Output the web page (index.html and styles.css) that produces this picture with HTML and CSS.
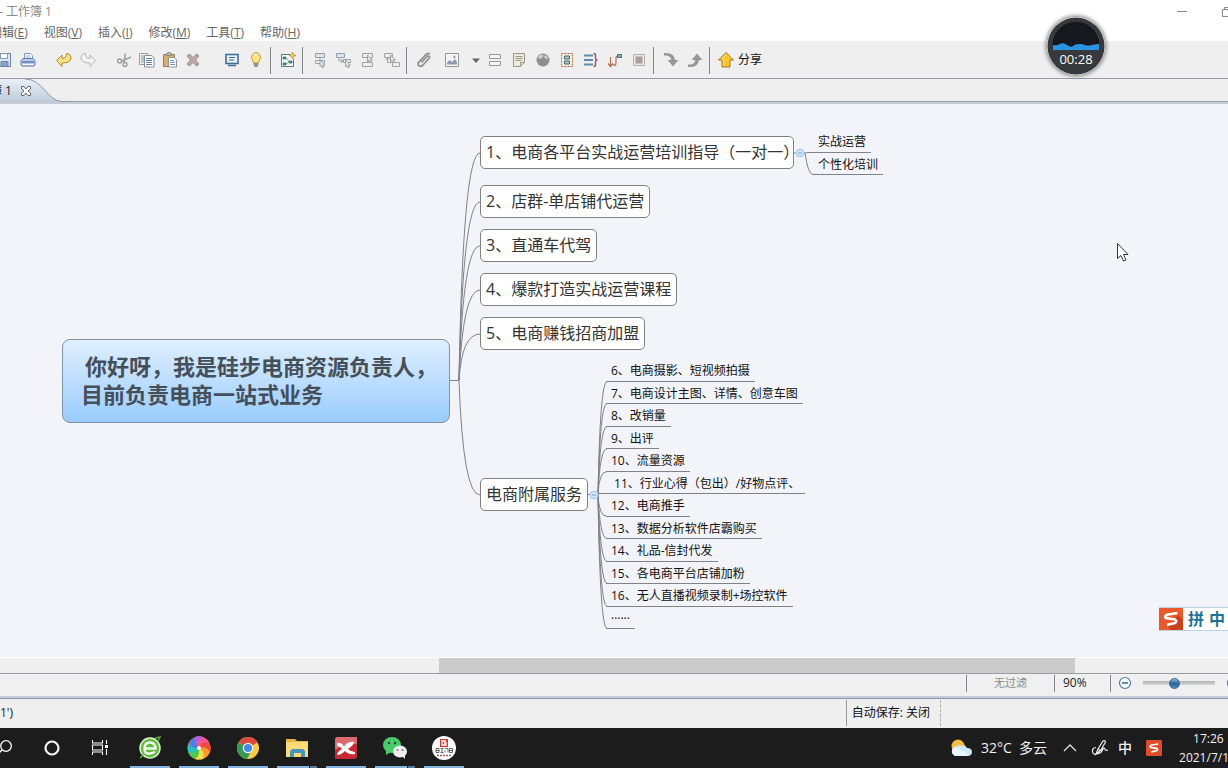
FILE: index.html
```html
<!DOCTYPE html>
<html lang="zh-CN">
<head>
<meta charset="utf-8">
<title>工作簿 1</title>
<link rel="stylesheet" href="styles.css">
</head>
<body>
<div class="app">
  <header class="titlebar">
    <span class="title">- 工作簿 1</span>
    <div class="window-buttons">
      <button class="plain" aria-label="最小化"><svg width="12" height="12" viewBox="0 0 12 12"><path d="M1 5.500h10" stroke="#888" fill="none"/></svg></button>
      <button class="plain" aria-label="还原"><svg width="12" height="12" viewBox="0 0 12 12"><path d="M1.500 3.500h7v7h-7zM3.500 3.500v-2h7v7h-2" stroke="#888" fill="none"/></svg></button>
    </div>
  </header>

  <nav class="menubar">
    <button>编辑(<u>E</u>)</button>
    <button>视图(<u>V</u>)</button>
    <button>插入(<u>I</u>)</button>
    <button>修改(<u>M</u>)</button>
    <button>工具(<u>T</u>)</button>
    <button>帮助(<u>H</u>)</button>
  </nav>

  <div class="toolbar">
    <div class="group first">
      <button aria-label="保存"><svg viewBox="0 0 16 16"><path d="M1.500 1.500h13v13h-11l-2-2z" fill="#dce8f4" stroke="#6685a6"/><path d="M4.500 1.500h7v5h-7z" fill="#fff" stroke="#7f9ab5"/><path d="M5 14V9.500h7V14" fill="#8ba6c2" stroke="#6685a6"/></svg></button>
      <button aria-label="打印"><svg viewBox="0 0 16 16"><path d="M4.500 7V1.500h6l2 2V7" fill="#fff" stroke="#8095b8"/><path d="M6 4h4M6 6h5" stroke="#8eabd1"/><path d="M1 8.500l2-2h10l2 2v4.500l-1 1H2l-1-1z" fill="#b9cde8" stroke="#607dab"/><path d="M2 10h12" stroke="#6f8fbd" stroke-width="2"/><path d="M2 12.500h12" stroke="#f4f8fc"/></svg></button>
    </div>
    <div class="group">
      <button aria-label="撤销"><svg viewBox="0 0 16 16"><path d="M.5 8.500L6 3v3.500Q11 6 10.500 1.500 15 2 15 6q0 5-9 5v3.500z" fill="#fbe08a" stroke="#b28c30"/></svg></button>
      <button aria-label="重做"><svg viewBox="0 0 16 16"><path d="M15.500 8.500L10 3v3.500Q5 6 5.500 1.500 1 2 1 6q0 5 9 5v3.500z" fill="#f2f2f2" stroke="#b4b4b4"/></svg></button>
    </div>
    <div class="group tight">
      <button aria-label="剪切"><svg viewBox="0 0 16 16"><path d="M8 10L9.500 1.500M6 9l9-4" stroke="#9d9d9d" stroke-width="1.500" fill="none"/><circle cx="3.500" cy="9" r="2" fill="none" stroke="#999" stroke-width="1.300"/><circle cx="9" cy="12.500" r="2" fill="none" stroke="#999" stroke-width="1.300"/></svg></button>
      <button aria-label="复制"><svg viewBox="0 0 16 16"><path d="M.5 1.500h8v11h-8z" fill="#f7f4e5" stroke="#a49e80"/><path d="M2 4h3M2 6h3M2 8h3M2 10h3" stroke="#7d94b8"/><path d="M5.500 3.500h7l2.500 2v9.500H5.500z" fill="#fff" stroke="#8d8f98"/><path d="M7 6.500h6M7 8.500h6M7 10.500h6M7 12.500h6" stroke="#5c81b5"/></svg></button>
      <button aria-label="粘贴"><svg viewBox="0 0 16 16"><path d="M1.500 2.500h11v12h-11z" fill="#dcae68" stroke="#a57a40"/><path d="M4 3.500q0-3 3-3t3 3z" fill="#bbb" stroke="#888"/><path d="M6.500 5.500h6l2 2v7.500h-8z" fill="#fff" stroke="#8c93a0"/><path d="M8 8.500h4M8 10.500h5M8 12.500h5" stroke="#7795c0"/></svg></button>
      <button aria-label="删除"><svg viewBox="0 0 16 16"><path d="M2 4l2.500-2L8 5.500 11.500 2 14 4l-3.500 4 3.500 4-2.500 2L8 10.500 4.500 14 2 12l3.500-4z" fill="#b9a8aa" stroke="#a39092"/></svg></button>
    </div>
    <div class="group">
      <button aria-label="演示"><svg viewBox="0 0 16 16"><rect x="2" y="2.500" width="12" height="9" fill="#e9f3fb" stroke="#426d9b" stroke-width="1.600"/><path d="M5 5.500h6M5 8h5" stroke="#426d9b"/><path d="M4 13.500h8" stroke="#426d9b" stroke-width="1.500"/></svg></button>
      <button aria-label="头脑风暴"><svg viewBox="0 0 16 16"><path d="M5.500 11Q5 9 4 7.500 2.500 5 4.500 2.500 6 .5 8 .5t3.500 2q2 2.500.5 5Q11 9 10.500 11z" fill="#ffe184" stroke="#ce9d3c"/><path d="M6 3.500q1-1.500 3-1" stroke="#fff" fill="none"/><path d="M5.500 12h5M6 14h4" stroke="#777c88" stroke-width="1.600"/></svg></button>
    </div>
    <span class="sep"></span>
    <div class="group">
      <button aria-label="新建图"><svg viewBox="0 0 16 16"><path d="M10 2.500H1.500v12h12V7" fill="#f7fbfd" stroke="#547d91"/><path d="M3 5h3v2H3zM3 11h3v2H3zM9 9h3v2H9z" fill="#568f62" stroke="#366b83" stroke-width=".7"/><path d="M6 6l3 3.500M6 12l3-2" stroke="#568f62" stroke-width=".8"/><path d="M12.500 0l1 2.500 2.500 1-2.500 1-1 2.500-1-2.500-2.500-1 2.500-1z" fill="#f3cf65" stroke="#ae812c" stroke-width=".7"/></svg></button>
    </div>
    <span class="sep"></span>
    <div class="group">
      <button aria-label="插入主题"><svg viewBox="0 0 16 16" fill="#eee" stroke="#9ba2a7"><path d="M3.500 1.500h9v4h-9z" fill="#dce6ef" stroke="#929fb0"/><path d="M8 5.500v3M3.500 8.500h9v3h-9z"/><path d="M8 8l5 5h-2.500L12 15l-1.500 1-1-2.500L8 14.500z"/></svg></button>
      <button aria-label="插入子主题"><svg viewBox="0 0 16 16" fill="#eee" stroke="#9ba2a7"><path d="M.5 1.500h8v4h-8z" fill="#dce6ef" stroke="#929fb0"/><path d="M3 6v3h4M5 7l2 2-2 2M7.500 7.500h7v3h-7z"/><path d="M9.500 8l5 5H12l1.500 2-1.500 1-1-2.500-1.500 1z"/></svg></button>
      <button aria-label="插入前主题"><svg viewBox="0 0 16 16" fill="#eee" stroke="#a1a3a0"><path d="M2.500 1.500h10v4h-10zM8 5.500v5M2.500 10.500h10v4h-10z"/><path d="M7.500 3l5 5H10l1.500 2-1.500 1-1-2.500-1.500 1z" fill="#e9e6d5"/></svg></button>
      <button aria-label="插入父主题"><svg viewBox="0 0 16 16" fill="#eee" stroke="#a1a3a0"><path d="M.5 1.500h8v4h-8zM3.500 6v4.500h5M1.500 8l2-2 2 2M8.500 10.500h7v4h-7z"/><path d="M6.500 3l5 5H9l1.500 2L9 11 8 8.500l-1.500 1z" fill="#e9e6d5"/></svg></button>
    </div>
    <span class="sep"></span>
    <div class="group">
      <button aria-label="附件"><svg viewBox="0 0 16 16"><path d="M5.500 10.500L11 4.500q1-1 2-.3 1 1 0 2.300l-6 6.500q-2 2-4 .7-2-1.700 0-3.700l7-7.500q2-2 4-.5" fill="none" stroke="#929292" stroke-width="1.800"/></svg></button>
      <button class="picture" aria-label="图片"><svg viewBox="0 0 16 16"><path d="M1.500 1.500h13v13h-13z" fill="#f4f4f6" stroke="#9797a0"/><path d="M3 12.500v-2L6 8l2 2 3-3 2 3v2.500z" fill="#8f9bae"/><path d="M9 5h3M10.500 3.500v3" stroke="#999"/></svg></button>
      <button class="drop" aria-label="图片选项"><svg viewBox="0 0 8 16"><path d="M0 6.500h8L4 11z" fill="#666"/></svg></button>
      <button aria-label="标签"><svg viewBox="0 0 16 16"><path d="M2.500 2.500h11v4h-11zM2.500 9.500h11v4h-11z" fill="#f5f5f5" stroke="#999"/></svg></button>
      <button aria-label="备注"><svg viewBox="0 0 16 16"><path d="M2.500 1.500h11v9l-4 4h-7z" fill="#eeeddd" stroke="#9a9980"/><path d="M4.500 4.500h7M4.500 6.500h7M4.500 8.500h6M9.500 14v-3.500h4" stroke="#9a9980" fill="none"/></svg></button>
      <button aria-label="超链接"><svg viewBox="0 0 16 16"><circle cx="8" cy="8" r="6.500" fill="#8e8e8e"/><path d="M3 5l3-2.500 3 1-2 2.500-3 1zM10 3l3 2-1 2.500-3-2z" fill="#d0d0d0"/></svg></button>
      <button aria-label="外框"><svg viewBox="0 0 16 16"><path d="M2.500 1.500h11v13h-11z" fill="none" stroke="#bc6c36" stroke-dasharray="2 1"/><path d="M5.500 4h5v3h-5zM5.500 9h5v3h-5z" fill="#b6c9c1" stroke="#426b65"/></svg></button>
      <button aria-label="概要"><svg viewBox="0 0 16 16"><path d="M1 3.500h9M1 8h9M1 12.500h9" stroke="#5f8cae" stroke-width="2"/><path d="M10.500 1.500q2 0 2 2V6q0 2 2 2-2 0-2 2v2.500q0 2-2 2" fill="none" stroke="#b44d6a" stroke-width="1.500"/></svg></button>
      <button aria-label="联系"><svg viewBox="0 0 16 16"><path d="M3.500 5v9M1 11.500l2.500 3 2.500-3M6 12.500q3 2.500 3-2V6q0-2 2-2" fill="none" stroke="#b36a4f" stroke-width="1.200"/><path d="M10.500 2.500h4v3h-4z" fill="#83a8a5" stroke="#3e737e"/></svg></button>
      <button aria-label="下钻"><svg viewBox="0 0 16 16"><path d="M2.500 2.500h11v11h-11z" fill="#eee5e5" stroke="#bbb0b0"/><path d="M4.500 4.500h7v7h-7z" fill="#ad9c9f"/></svg></button>
    </div>
    <span class="sep"></span>
    <div class="group">
      <button aria-label="深入"><svg viewBox="0 0 16 16"><path d="M1 1q10-1 11 7h3.500L10 14.500 4.500 8H8Q8 3 1 3.500z" fill="#989898"/></svg></button>
      <button aria-label="返回"><svg viewBox="0 0 16 16"><path d="M1 15q10 1 11-7h3.500L10 1.500 4.500 8H8q0 5-7 4.500z" fill="#989898"/></svg></button>
    </div>
    <span class="sep"></span>
    <button class="share"><svg viewBox="0 0 16 16"><path d="M8 .5L15.500 8H12v7H4V8H.5z" fill="#f9c52c" stroke="#a97725"/><path d="M8 2.500L4 7h1.500v6" stroke="#ffe994" fill="none"/></svg>分享</button>
  </div>

  <div class="tabs">
    <div class="tab">
      <svg class="tab-shape" width="72" height="23" viewBox="0 0 72 23"><defs><linearGradient id="tabFill" x2="0" y2="1"><stop stop-color="#e9f0f7"/><stop offset="1" stop-color="#bccbdc"/></linearGradient></defs><path d="M0 0h25c18 0 22 22 37 22.500h10v.5H0z" fill="url(#tabFill)"/><path d="M25 0c18 0 22 22 37 22.500h10" fill="none" stroke="#8d99a8"/></svg>
      <span class="tab-label">工作簿 1</span>
      <button class="plain tab-close" aria-label="关闭"><svg width="10" height="10" viewBox="0 0 10 10"><path d="M.5 .5h2.500L5 3 7 .5h2.500V3L7 5l2.500 2v2.500H7L5 7 3 9.500H.5V7L3 5 .5 3z" fill="#fff" stroke="#666"/></svg></button>
    </div>
  </div>

  <main class="canvas">
    <svg class="edges" width="1228" height="553" viewBox="0 104 1228 553" fill="none" stroke="#808287">
      <path d="M450 380.500h9M459 380Q463 153 480 153M459 380Q463 202 480 202M459 380Q463 246 480 246M459 380Q463 290 480 290M459 380Q462 334 480 334M459 380Q463 495 480 495"/>
      <path d="M794 153h11M805 153l3-.5M805 153Q808 174.500 813 174.500"/>
      <path d="M588 494.500h10M598 494.500Q600 381.500 607 381.500M598 494.500Q600 403.500 607 403.500M598 494.500Q600 426.500 607 426.500M598 494.500Q600 448.500 607 448.500M598 494.500Q599 471.500 607 471.500M598 493.500h9M598 494.500Q599 516.500 607 516.500M598 494.500Q600 538.500 607 538.500M598 494.500Q600 561.500 607 561.500M598 494.500Q600 583.500 607 583.500M598 494.500Q600 606.500 607 606.500M598 494.500Q600 628.500 607 628.500"/>
      <g fill="#cfe2f7" stroke="#a9c8ea"><circle cx="800" cy="153" r="4"/><circle cx="594" cy="495" r="4"/></g>
      <path d="M798 153h4M592 495h4" stroke="#7ba5d4"/>
    </svg>
    <div class="central"><div class="indent">你好呀，我是硅步电商资源负责人，</div><div>目前负责电商一站式业务</div></div>
    <div class="topic t1">1、电商各平台实战运营培训指导（一对一）</div>
    <div class="topic t2">2、店群-单店铺代运营</div>
    <div class="topic t3">3、直通车代驾</div>
    <div class="topic t4">4、爆款打造实战运营课程</div>
    <div class="topic t5">5、电商赚钱招商加盟</div>
    <div class="topic t6">电商附属服务</div>
    <ul class="subs training">
      <li>实战运营</li>
      <li>个性化培训</li>
    </ul>
    <ul class="subs services">
      <li>6、电商摄影、短视频拍摄</li>
      <li>7、电商设计主图、详情、创意车图</li>
      <li>8、改销量</li>
      <li>9、出评</li>
      <li>10、流量资源</li>
      <li>&nbsp;11、行业心得（包出）/好物点评、</li>
      <li>12、电商推手</li>
      <li>13、数据分析软件店霸购买</li>
      <li>14、礼品-信封代发</li>
      <li>15、各电商平台店铺加粉</li>
      <li>16、无人直播视频录制+场控软件</li>
      <li>······</li>
    </ul>
    <svg class="cursor" width="14" height="22" viewBox="0 0 14 22"><path d="M1.500 1.500v15l3.500-3 2.500 5.500 2.500-1-2.500-5.500h4.500z" fill="#fff" stroke="#333"/></svg>
    <div class="ime">
      <svg width="24" height="24" viewBox="0 0 24 24"><path d="M0 0h24v24H0z" fill="#e9592b"/><path d="M9 19l10-11 5 5v11H13z" fill="#c9421d"/><path d="M18.500 6L9 7.500Q5.500 8.500 6.500 11L16 12.500q2.500 1.500 0 3.500L8 18" fill="none" stroke="#fff" stroke-width="2.600" stroke-linejoin="round"/></svg>
      <span>拼</span><span>中</span>
    </div>
  </main>

  <div class="scrollbar"><div class="thumb"></div></div>

  <div class="statusbar">
    <span class="filter">无过滤</span>
    <span class="percent">90%</span>
    <div class="zoom">
      <button class="plain" aria-label="缩小"><svg width="14" height="14" viewBox="0 0 14 14"><circle cx="7" cy="7" r="5.500" fill="#f8fbff" stroke="#4f7ba9" stroke-width="1.200"/><path d="M4 7h6" stroke="#2f659c" stroke-width="1.500"/></svg></button>
      <input type="range" min="0" max="100" value="43" aria-label="缩放">
      <button class="plain" aria-label="放大"><svg width="14" height="14" viewBox="0 0 14 14"><circle cx="7" cy="7" r="5.500" fill="#f8fbff" stroke="#4f7ba9" stroke-width="1.200"/><path d="M4 7h6M7 4v6" stroke="#2f659c" stroke-width="1.500"/></svg></button>
    </div>
  </div>

  <footer class="infobar">
    <span class="selection">1')</span>
    <span class="autosave">自动保存: 关闭</span>
  </footer>

  <div class="taskbar">
    <div class="apps">
      <button aria-label="搜索"><svg viewBox="0 0 24 24"><circle cx="15" cy="10" r="5.300" fill="none" stroke="#fff" stroke-width="1.300"/><path d="M11 14l-5 5" stroke="#fff" stroke-width="1.300"/></svg></button>
      <button aria-label="Cortana"><svg viewBox="0 0 24 24"><circle cx="12" cy="12" r="6.500" fill="none" stroke="#f4f4f4" stroke-width="2.200"/></svg></button>
      <button aria-label="任务视图"><svg viewBox="0 0 24 24"><path d="M3.500 4v3h10V4M3.500 19v-3h10v3M3.500 9h10v5h-10zM17.500 4v4M17.500 13v6" fill="none" stroke="#fff" stroke-width="1.100"/><path d="M16 9h3v3h-3z" fill="#fff"/></svg></button>
      <button class="running" aria-label="360浏览器"><svg viewBox="0 0 24 24"><circle cx="12" cy="12" r="10" fill="#62b946" stroke="#d9f5c9" stroke-width="1.500"/><path d="M6.500 12.500h11q0-6-5.500-6t-5.500 6 5.500 5q3 0 5-2" fill="none" stroke="#f0fbe8" stroke-width="2.400"/><path d="M2 22q2-1 3-4M17 2l5-1-2 4" stroke="#57a83b" stroke-width="1.500" fill="none"/></svg></button>
      <button class="running" aria-label="极速浏览器"><svg viewBox="0 0 24 24"><circle cx="12" cy="12" r="11.500" fill="#f2783a"/><path d="M12 12Q5 8 8 1q4-2 8 0Q9 5 12 12" fill="#b15ce4"/><path d="M12 12Q10 4 16 1q5 2 6 6-7-1-10 5" fill="#f35597"/><path d="M12 12q3-7 10-5 3 5 1 9-4-6-11-4" fill="#ef493c"/><path d="M12 12q8-2 11 4-2 5-7 7 2-7-4-11" fill="#f69a31"/><path d="M12 12q7 5 4 11-5 1-8 0 5-5 4-11" fill="#f6df4c"/><path d="M12 12q1 8-4 11-5-2-7-7 7 1 11-4" fill="#53c64c"/><path d="M12 12q-4 7-11 4-1-5 1-9 3 6 10 5" fill="#2bbfc4"/><path d="M12 12Q4 13 2 7q2-4 6-6-2 7 4 11" fill="#497fe8"/><circle cx="12" cy="12" r="2" fill="#fff"/></svg></button>
      <button class="running" aria-label="Chrome"><svg viewBox="0 0 24 24"><circle cx="12" cy="12" r="11" fill="#f7cb45"/><path d="M12 12L2.500 6.500a11 11 0 0 1 19 0z" fill="#d94a3a"/><path d="M2.500 6.500a11 11 0 0 0 8.500 16.500l5-9-4-2z" fill="#359b52"/><circle cx="12" cy="12" r="5.200" fill="#fff"/><circle cx="12" cy="12" r="4" fill="#4586e8"/></svg></button>
      <button class="running stacked" aria-label="文件资源管理器"><svg viewBox="0 0 24 24"><path d="M1 3h9l2 2h11v16H1z" fill="#e6b64a"/><path d="M1 6h22v15H1z" fill="#f8da77"/><path d="M5 21v-6l2-2h11l2 2v6h-4v-4H9v4z" fill="#4795bd"/></svg></button>
      <button class="running" aria-label="XMind"><svg viewBox="0 0 24 24"><path d="M1 4q0-3 3-3h19v19q0 3-3 3H1z" fill="#c62b35"/><path d="M1 4q0-3 3-3h19v7Q10 7 1 14z" fill="#db6b70"/><path d="M3 7q4-1 7 3 5-5 10-4 0 3-6 7 3 3 7 3v2q-6 1-10-3-4 4-8 4 0-3 5-6-2-3-5-3z" fill="#fff"/></svg></button>
      <button class="running stacked" aria-label="微信"><svg viewBox="0 0 24 24"><ellipse cx="9" cy="9" rx="9" ry="8" fill="#49cb69"/><path d="M3 14v5l5-3z" fill="#49cb69"/><circle cx="6" cy="7" r="1.200" fill="#244e32"/><circle cx="12" cy="7" r="1.200" fill="#244e32"/><ellipse cx="17" cy="15.500" rx="7" ry="6" fill="#eee"/><path d="M19 20l3 3v-5z" fill="#eee"/><circle cx="14.500" cy="14" r="1" fill="#777"/><circle cx="19.500" cy="14" r="1" fill="#777"/></svg></button>
      <button class="running" aria-label="硅步电商"><svg viewBox="0 0 24 24"><circle cx="12" cy="12" r="12" fill="#fff"/><path d="M8 3h8v8H8z" fill="#d33b36"/><path d="M14 5h-4v4h4V7h-2" fill="none" stroke="#fff" stroke-width="1.300"/><path d="M4 12.500h3v4H4zM8.500 12.500h3M8.500 16.500h3M10 12.500v4M13 12.500h3v4M13 14.500v2M17.500 12.500h3v4h-3zM4 14.500h3M17.500 14.500h3" fill="none" stroke="#444" stroke-width=".8"/><path d="M5 19.500h14" stroke="#a65a56" stroke-width="1.500" stroke-dasharray="2 1"/></svg></button>
    </div>
    <div class="tray">
      <button class="plain weather"><svg width="22" height="18" viewBox="0 0 22 18"><circle cx="8" cy="7" r="6.500" fill="#f5bd42"/><path d="M5 17a5 5 0 0 1-.5-9Q8 5 12 7q3-2 5 2 5 0 5 4t-5 4z" fill="#cfe6f6"/><path d="M5 17a5 5 0 0 1-.5-9q5 0 7 4 5 0 7 5z" fill="#e9f5fc"/></svg>32°C&nbsp; 多云</button>
      <button class="plain caret" aria-label="隐藏的图标"><svg width="14" height="12" viewBox="0 0 14 12"><path d="M1 9l6-6 6 6" fill="none" stroke="#ddd" stroke-width="1.300"/></svg></button>
      <button class="plain" aria-label="触控笔"><svg width="18" height="18" viewBox="0 0 18 18"><path d="M5 15l2-5 5-8q2-1 2.500 1L10 11zM7 10l2.500 1.500M5 8.500Q1 9 1.500 12.500T5 15q5 0 7-5 1-2 2 0 0 2 3 1" fill="none" stroke="#eee" stroke-width="1.200"/></svg></button>
      <button class="plain lang">中</button>
      <button class="plain" aria-label="搜狗输入法"><svg width="16" height="16" viewBox="0 0 24 24"><rect width="24" height="24" rx="2" fill="#df4c2b"/><path d="M18.500 6L9 7.500Q5.500 8.500 6.500 11L16 12.500q2.500 1.500 0 3.500L8 18" fill="none" stroke="#fff" stroke-width="2.600" stroke-linejoin="round"/></svg></button>
      <div class="clock"><div class="time">17:26</div><div>2021/7/1</div></div>
    </div>
  </div>

  <div class="timer">
    <svg width="58" height="58" viewBox="0 0 58 58"><circle cx="29" cy="29" r="28.500" fill="#38393d"/><path d="M6 33a23.500 23.500 0 1 1 46 0z" fill="#15191f"/><path d="M6 28q4 1 7-1t7 1 6 1 6-2 6 1 7 0 7-1v6H6z" fill="#2a93e4"/></svg>
    <span>00:28</span>
  </div>
</div>
</body>
</html>
```
FILE: styles.css
```css
* { box-sizing: border-box; }

body {
  margin: 0;
  font: 12px/16px "Open Sans", "Noto Sans CJK SC", sans-serif;
  color: #222;
}

button {
  margin: 0;
  padding: 0;
  border: 0;
  background: none;
  font: inherit;
  color: inherit;
  white-space: nowrap;
}

svg { display: block; }

.app {
  position: relative;
  display: flex;
  flex-direction: column;
  height: 100vh;
  overflow: hidden;
  background: #fff;
}

.titlebar {
  display: flex;
  justify-content: space-between;
  align-items: center;
  height: 23px;
  flex: none;
  color: #8a8a8a;
}

.title { margin-left: -1px; }

.window-buttons {
  display: flex;
  gap: 33px;
  margin-right: -5px;
}

.menubar {
  display: flex;
  gap: 16px;
  flex: none;
  height: 18px;
  padding-top: 2px;
  margin-left: -10px;
  align-items: center;
  color: #666;
}

.toolbar {
  display: flex;
  align-items: center;
  flex: none;
  height: 38px;
  padding-top: 1px;
  background: #efefef;
  border-bottom: 1px solid #9a9da3;
}

.group { display: flex; }
.group button {
  display: flex;
  justify-content: center;
  width: 24px;
}
.group + .group { margin-left: 12px; }
.group.first { margin-left: -8px; }
.group.tight + .group { margin-left: 16px; }
.group.tight button { width: 23px; }
.toolbar svg {
  width: 16px;
  height: 16px;
}
.group .picture { margin: 0 4px; }
.group .drop { width: 15px; }
.group .drop svg { width: 8px; }

.sep {
  width: 1px;
  height: 27px;
  margin: 0 5px 0 2px;
  background: #85878c;
}

.share {
  display: flex;
  align-items: center;
  gap: 4px;
  margin-left: 3px;
  color: #111;
}

.tabs {
  flex: none;
  height: 25px;
  background: #efefef;
  border-bottom: 2px solid #c6cbd4;
  box-shadow: inset 0 -1px #9ba3b0;
}

.tab {
  position: relative;
  display: flex;
  align-items: center;
  gap: 9px;
  width: 72px;
  height: 23px;
}

.tab-shape {
  position: absolute;
  inset: 0;
}

.tab-label {
  position: relative;
  margin-left: -34px;
  white-space: nowrap;
}

.tab-close { position: relative; }

.canvas {
  position: relative;
  flex: 1;
  min-height: 0;
  overflow: hidden;
  background: #f3f4f9;
}

.edges {
  position: absolute;
  left: 0;
  top: 0;
}

.central {
  position: absolute;
  left: 62px;
  top: 235px;
  padding: 12px 10px 14px 18px;
  border: 1px solid #8492a5;
  border-radius: 8px;
  background: linear-gradient(#dfeffe, #9accff);
  font-size: 22px;
  font-weight: 700;
  line-height: 28px;
  color: #444f5a;
  white-space: nowrap;
  width: 388px;
}
.central .indent { padding-left: 4px; }

.topic {
  position: absolute;
  left: 480px;
  height: 33px;
  padding: 0 5px;
  border: 1px solid #808080;
  border-radius: 5px;
  background: #fff;
  font-size: 16px;
  line-height: 31px;
  color: #333;
  white-space: nowrap;
}
.t1 { top: 32px; width: 314px; }
.t2 { top: 81px; }
.t3 { top: 125px; }
.t4 { top: 169px; }
.t5 { top: 213px; }
.t6 { top: 374px; }

.subs {
  position: absolute;
  display: grid;
  grid-auto-rows: 1fr;
  justify-items: start;
  margin: 0;
  padding: 0;
  list-style: none;
  color: #111;
  white-space: nowrap;
}
.subs li {
  padding: 4px 5px 0;
  border-bottom: 1px solid #808287;
}

.training {
  left: 808px;
  top: 26px;
  height: 45px;
}
.training li { padding-left: 10px; }
.training li + li { margin-left: 4px; padding-left: 6px; }

.services {
  left: 606px;
  top: 255px;
  height: 270px;
}

.cursor {
  position: absolute;
  left: 1116px;
  top: 138px;
}

.ime {
  position: absolute;
  right: 0;
  top: 503px;
  display: flex;
  align-items: center;
  gap: 5px;
  width: 69px;
  height: 24px;
  overflow: hidden;
  background: #fff;
  border-top: 1px solid #bcd0e4;
  border-bottom: 1px solid #bcd0e4;
  font-size: 16px;
  font-weight: 700;
  color: #1c7299;
}
.ime svg { flex: none; }

.scrollbar {
  flex: none;
  height: 16px;
  padding-left: 439px;
  border-top: 1px solid #fff;
  background: #efefef;
}
.thumb {
  width: 80.6%;
  height: 15px;
  background: #cbcbcb;
}

.statusbar {
  display: flex;
  justify-content: flex-end;
  align-items: center;
  flex: none;
  height: 25px;
  padding-bottom: 4px;
  margin-right: -12px;
  background: #f0f0f1;
  border-top: 1px solid #9a9da3;
  border-bottom: 2px solid #c6cbd8;
}

.filter, .percent {
  height: 17px;
  border-left: 1px solid #85878c;
}
.filter {
  width: 88px;
  text-align: center;
  font-size: 11px;
  color: #888;
}
.percent {
  width: 56px;
  padding-left: 8px;
}

.zoom {
  display: flex;
  align-items: center;
  gap: 11px;
  height: 17px;
  padding-left: 7px;
  border-left: 1px solid #85878c;
}

.zoom input {
  appearance: none;
  width: 72px;
  height: 12px;
  margin: 0;
  background: linear-gradient(transparent 4px, #b3b5b8 4px, #d5d7d9 8px, transparent 8px);
}
.zoom input::-webkit-slider-thumb {
  appearance: none;
  width: 11px;
  height: 11px;
  border: 1px solid #376591;
  border-radius: 50%;
  background: linear-gradient(#8fb6dc, #28659f 50%, #4f8cc2);
}

.infobar {
  display: flex;
  justify-content: space-between;
  align-items: center;
  flex: none;
  height: 30px;
  padding: 0 287px 2px 0;
  background: #efefef;
  border-top: 1px solid #8f98a8;
}

.autosave {
  padding: 5px 10px 5px 5px;
  border-left: 1px solid #999;
  border-right: 1px dashed #aaa;
  color: #111;
}

.taskbar {
  display: flex;
  justify-content: space-between;
  flex: none;
  height: 40px;
  background: #1c1c1d;
  color: #f2f2f2;
}

.apps {
  display: flex;
  margin-left: -22px;
}
.apps button {
  display: flex;
  align-items: center;
  justify-content: center;
  width: 49px;
}
.apps svg {
  width: 24px;
  height: 24px;
}
.apps .running {
  background: linear-gradient(#83b4e2, #83b4e2) center bottom / 40px 2px no-repeat;
}
.apps .stacked {
  background: linear-gradient(90deg, #83b4e2 32px, #1c1c1d 32px, #1c1c1d 33px, #55779a 33px) center bottom / 40px 2px no-repeat;
}

.tray {
  display: flex;
  align-items: center;
  margin-right: -1px;
}
.tray button { margin-right: 9px; }
.tray .weather {
  display: flex;
  align-items: center;
  gap: 9px;
  margin-right: 16px;
  font-size: 14px;
}
.tray .caret { margin-right: 14px; }
.tray .lang {
  font-size: 14px;
  font-weight: 500;
  margin-right: 14px;
}

.clock {
  margin-left: 8px;
  line-height: 19px;
}
.time { padding-left: 14px; }

.timer {
  position: absolute;
  right: 123px;
  top: 17px;
  border-radius: 50%;
  box-shadow: 0 0 4px 1px #777;
}
.timer span {
  position: absolute;
  left: 0;
  right: 0;
  top: 34px;
  text-align: center;
  font-size: 13px;
  color: #fff;
}
```
